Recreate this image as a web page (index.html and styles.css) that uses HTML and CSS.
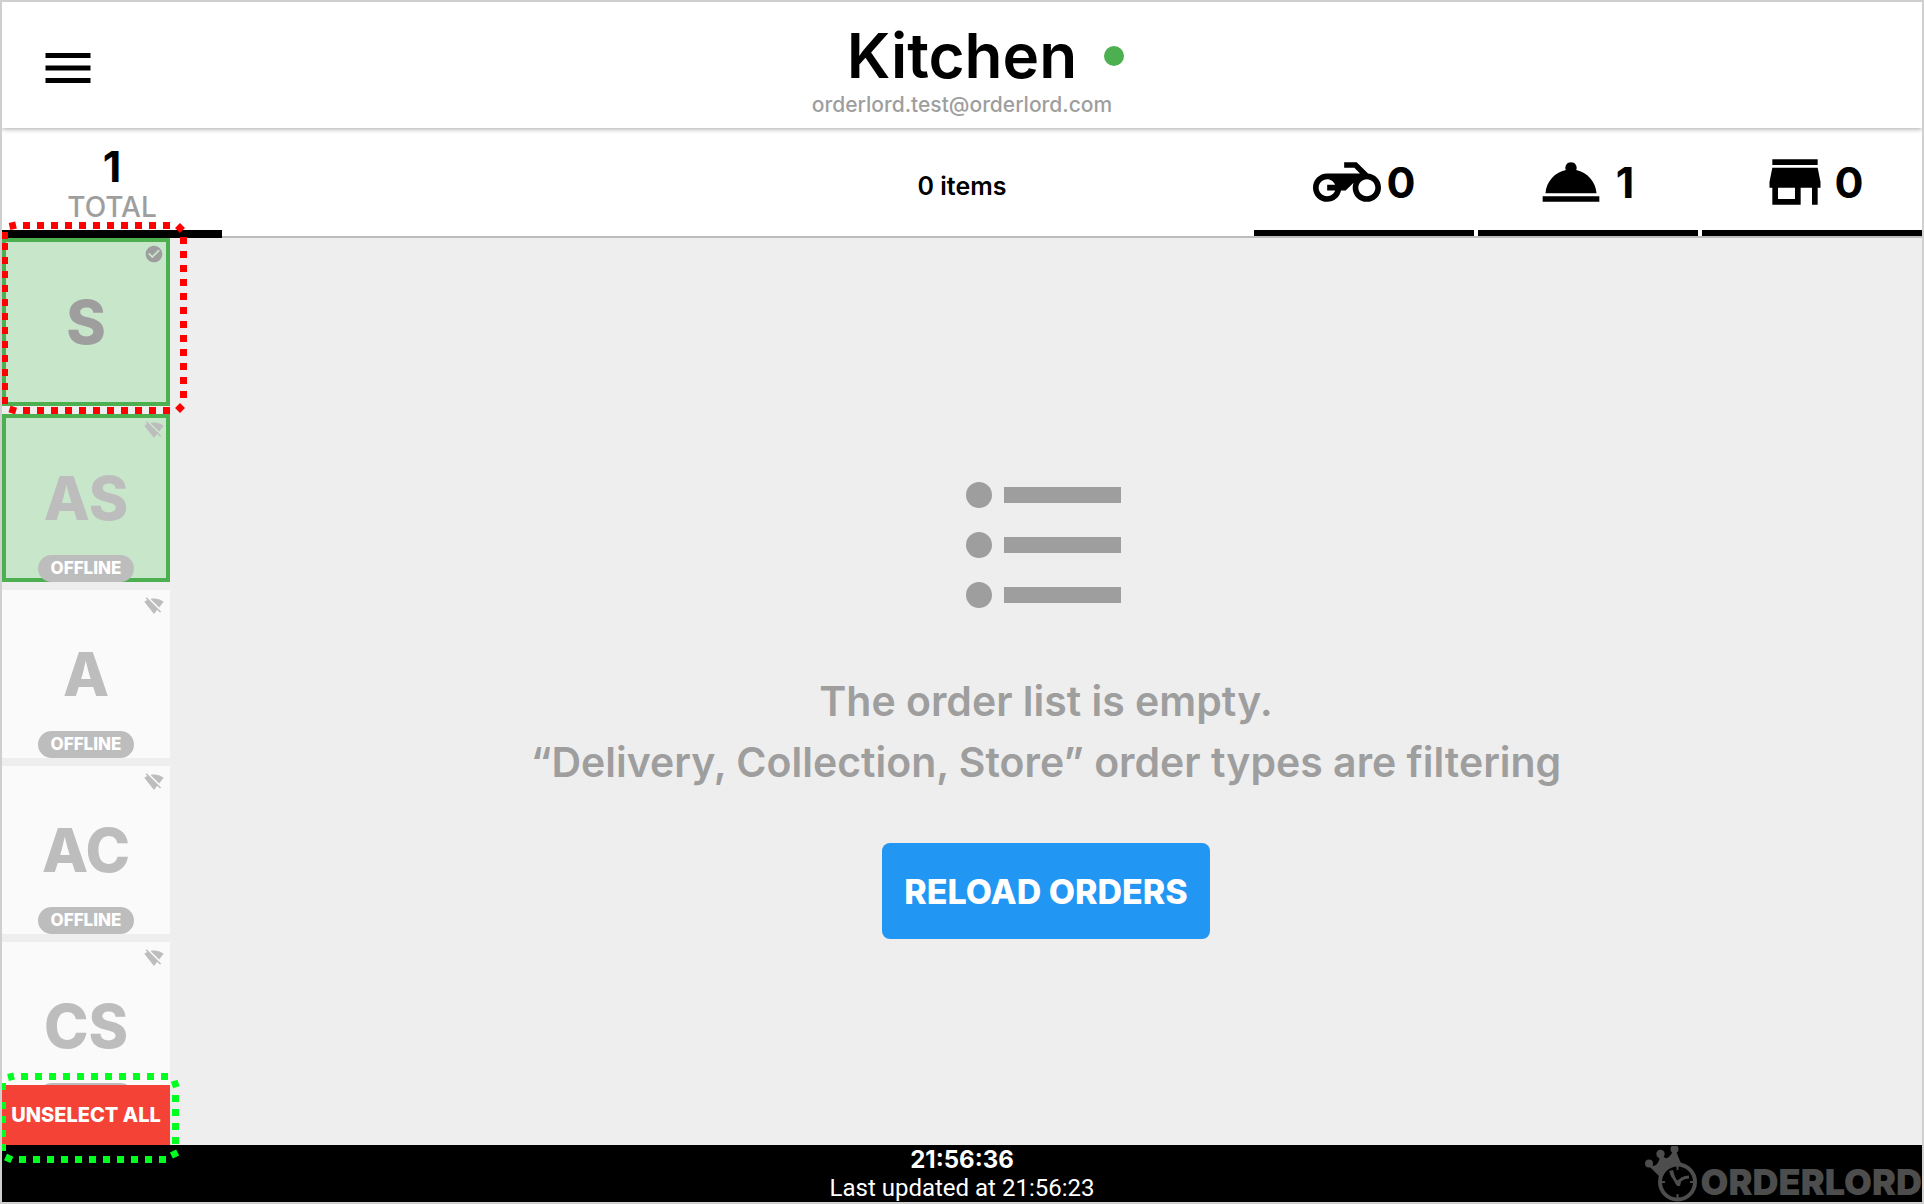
FILE: index.html
```html
<!DOCTYPE html>
<html lang="en">
<head>
<meta charset="utf-8">
<title>Kitchen</title>
<link rel="stylesheet" href="styles.css">
</head>
<body>
<svg class="defs" aria-hidden="true">
  <symbol id="wifi-off" viewBox="0 0 24 24"><path d="M23.640 7c-.45-.34-4.930-4-11.640-4-1.500 0-2.890.19-4.150.48L18.180 13.800 23.640 7zm-6.600 8.220L3.270 1.440 2 2.720l2.050 2.060C1.910 5.760.59 6.820.36 7l11.630 14.490.01.01.01-.01 3.900-4.860 3.320 3.320 1.270-1.270-3.460-3.460z"/></symbol>
</svg>
<header class="header">
  <button class="menu" type="button" aria-label="Menu">
    <svg viewBox="0 0 24 24"><path d="M3 18h18v-2H3v2zm0-5h18v-2H3v2zm0-7v2h18V6H3z"/></svg>
  </button>
  <div class="heading">
    <h1 class="title">Kitchen<span class="status"></span></h1>
    <p class="account">orderlord.test@orderlord.com</p>
  </div>
</header>
<nav class="stats">
  <button class="total" type="button"><span class="count">1</span><span class="total-label">TOTAL</span></button>
  <p class="items">0 items</p>
  <div class="types">
    <button class="type" type="button" aria-label="Delivery">
      <svg class="type-icon" viewBox="0 0 24 24"><path d="M19.440 9.030L15.410 5H11v2h3.590l2 2H5c-2.800 0-5 2.200-5 5s2.200 5 5 5c2.460 0 4.450-1.690 4.900-4h1.650l2.770-2.770c-.21.54-.32 1.140-.32 1.770 0 2.800 2.200 5 5 5s5-2.200 5-5c0-2.650-1.970-4.770-4.560-4.970zM7.820 15C7.400 16.150 6.280 17 5 17c-1.630 0-3-1.370-3-3s1.370-3 3-3c1.280 0 2.400.85 2.820 2H5v2h2.820zM19 17c-1.660 0-3-1.340-3-3s1.340-3 3-3 3 1.340 3 3-1.340 3-3 3z"/></svg>
      <span class="count">0</span>
    </button>
    <button class="type" type="button" aria-label="Collection">
      <svg class="type-icon" viewBox="0 0 24 24"><path d="M2 17h20v2H2zM13.840 7.790A2.006 2.006 0 0 0 12 5a2.006 2.006 0 0 0-1.840 2.790C6.250 8.600 3.270 11.930 3 16h18c-.27-4.070-3.250-7.400-7.160-8.210z"/></svg>
      <span class="count">1</span>
    </button>
    <button class="type" type="button" aria-label="Store">
      <svg class="type-icon" viewBox="0 0 24 24"><path d="M20 4H4v2h16V4zm1 10v-2l-1-5H4l-1 5v2h1v6h10v-6h4v6h2v-6h1zm-9 4H6v-4h6v4z"/></svg>
      <span class="count">0</span>
    </button>
  </div>
</nav>
<div class="content">
  <aside class="sidebar">
    <div class="tiles">
      <button class="tile tile-selected tile-online" type="button">S
        <svg class="tile-icon" viewBox="0 0 24 24"><path d="M12 2C6.480 2 2 6.480 2 12s4.480 10 10 10 10-4.480 10-10S17.520 2 12 2zm-2 15l-5-5 1.410-1.410L10 14.170l7.590-7.590L19 8l-9 9z"/></svg>
      </button>
      <button class="tile tile-selected" type="button">AS<svg class="tile-icon"><use href="#wifi-off"/></svg><span class="badge">OFFLINE</span></button>
      <button class="tile" type="button">A<svg class="tile-icon"><use href="#wifi-off"/></svg><span class="badge">OFFLINE</span></button>
      <button class="tile" type="button">AC<svg class="tile-icon"><use href="#wifi-off"/></svg><span class="badge">OFFLINE</span></button>
      <button class="tile" type="button">CS<svg class="tile-icon"><use href="#wifi-off"/></svg><span class="badge">OFFLINE</span></button>
    </div>
    <button class="unselect" type="button">UNSELECT ALL</button>
    <svg class="outline outline-tile" viewBox="0 0 190 196" aria-hidden="true">
      <path d="M23 7.500H171M23 192.500H171M183.500 19V181M4.500 39V190"/>
      <path d="M4.500 14V21M4.500 25V32"/>
      <path d="M9.500 8.500L16 7M177.500 7.500L182.500 12.500M182.500 187.500L177.500 192.500M9.500 191L16 193"/>
    </svg>
    <svg class="outline outline-unselect" viewBox="0 0 184 94" aria-hidden="true">
      <path d="M21 5.500H169M19 88.500H167M175.500 24V74M2.500 31V81M2.500 12V24"/>
      <path d="M8 6.500L14 5M172 14L178.500 12M173 80L176 86M5.500 86L12 89"/>
    </svg>
  </aside>
  <main class="empty">
    <svg class="list-icon" viewBox="0 0 160 128" aria-hidden="true">
      <circle cx="13" cy="14" r="13"/><circle cx="13" cy="64" r="13"/><circle cx="13" cy="114" r="13"/>
      <path d="M38 6h117v16H38zM38 56h117v16H38zM38 106h117v16H38z"/>
    </svg>
    <p class="message">The order list is empty.<br>“Delivery, Collection, Store” order types are filtering</p>
    <button class="reload" type="button">RELOAD ORDERS</button>
  </main>
</div>
<footer class="footer">
  <div class="times">
    <time class="clock">21:56:36</time>
    <span class="updated">Last updated at 21:56:23</span>
  </div>
  <div class="brand">
    <svg class="brand-icon" viewBox="0 0 54 56" aria-hidden="true">
      <circle cx="4" cy="17.500" r="4"/><circle cx="15.500" cy="8" r="4.200"/><circle cx="29.500" cy="3" r="4"/>
      <path d="M3 19L8 20Q14 20 15 9H17Q22 17 28 5H31L37 20Q24 18 15 31z"/>
      <circle class="face" cx="32.500" cy="36" r="17.500"/>
      <path class="ticks" d="M32.500 19v5M32.500 48v5M15 36h5M45 36h5"/>
      <path class="hands" d="M32.500 38L26 27M32.500 38Q36 31 44 31"/>
      <path d="M24 25l4-1 2 7-3 1zM30 36l3-2 3 2-1 4-3 0z"/>
    </svg>
    <span>ORDERLORD</span>
  </div>
</footer>
</body>
</html>
```
FILE: styles.css
```css
* { box-sizing: border-box; }

body {
  margin: 0;
  height: 100vh;
  display: flex;
  flex-direction: column;
  overflow: hidden;
  border: 2px solid #cfcfcf;
  background: #fff;
  color: #000;
  font-family: Inter, "Open Sans", sans-serif;
}

h1, p { margin: 0; }

button {
  margin: 0;
  padding: 0;
  border: 0;
  background: none;
  color: inherit;
  font: inherit;
  cursor: pointer;
}

svg { display: block; flex: none; }

.defs { position: absolute; width: 0; height: 0; }

.header {
  position: relative;
  z-index: 1;
  flex: none;
  display: grid;
  grid-template-columns: 1fr auto 1fr;
  height: 126px;
  padding: 0 36px;
  background: #fff;
  box-shadow: 0 1px 5px rgba(0, 0, 0, 0.35);
}

.menu { justify-self: start; align-self: center; padding-top: 6px; }
.menu svg { width: 60px; height: 60px; }

.heading {
  min-width: 324px;
  margin: 0 -12px;
  padding-top: 19px;
  text-align: center;
}

.title {
  position: relative;
  font-size: 62px;
  font-weight: 600;
  line-height: 70px;
}

.status {
  position: absolute;
  top: 25px;
  right: 0;
  width: 20px;
  height: 20px;
  border-radius: 50%;
  background: #4caf50;
}

.account { font-size: 21px; font-weight: 500; line-height: 28px; color: #9e9e9e; }

.stats {
  flex: none;
  display: grid;
  grid-template-columns: 1fr auto 1fr;
  grid-template-rows: 108px;
  height: 110px;
  border-bottom: 2px solid #bdbdbd;
}

.count {
  min-width: 28px;
  font-size: 43px;
  font-weight: 700;
  line-height: 44px;
}

.total {
  z-index: 1;
  width: 220px;
  height: 110px;
  padding-top: 16px;
  display: flex;
  flex-direction: column;
  align-items: center;
  border-bottom: 8px solid #000;
}

.total-label { font-size: 28px; font-weight: 500; line-height: 38px; color: #9e9e9e; }

.items { align-self: center; padding-top: 8px; font-size: 25px; font-weight: 600; line-height: 30px; }

.types { display: flex; justify-content: flex-end; gap: 4px; }

.type {
  width: 220px;
  padding-top: 6px;
  display: flex;
  align-items: center;
  justify-content: center;
  gap: 6px;
  border-bottom: 6px solid #000;
}

.type-icon { width: 68px; height: 68px; }

.content { flex: 1; min-height: 0; display: flex; background: #eee; }

.sidebar {
  position: relative;
  flex: none;
  width: 168px;
  display: flex;
  flex-direction: column;
}

.tiles {
  flex: 1;
  min-height: 0;
  overflow: hidden;
  display: flex;
  flex-direction: column;
  gap: 8px;
}

.tile {
  position: relative;
  flex: none;
  height: 168px;
  background: #fafafa;
  color: #bdbdbd;
  font-size: 60px;
  font-weight: 800;
  line-height: 166px;
  text-align: center;
}

.tile-selected {
  background: #c8e6c9;
  box-shadow: inset 0 0 0 4px #4caf50;
}

.tile-online { color: #9e9e9e; }

.tile-icon {
  position: absolute;
  top: 6px;
  right: 6px;
  width: 20px;
  height: 20px;
  fill: currentColor;
}

.badge {
  position: absolute;
  bottom: 0;
  left: 50%;
  width: 96px;
  margin-left: -48px;
  border-radius: 14px;
  background: #bdbdbd;
  color: #fff;
  font-size: 17px;
  line-height: 27px;
}

.unselect {
  flex: none;
  height: 60px;
  background: #f44336;
  color: #fff;
  font-size: 20px;
  font-weight: 800;
  white-space: nowrap;
}

.outline {
  position: absolute;
  z-index: 2;
  left: -2px;
  fill: none;
  stroke-width: 7;
  stroke-dasharray: 7 7;
  pointer-events: none;
}

.outline-tile { top: -20px; width: 190px; height: 196px; stroke: #f00; }
.outline-unselect { bottom: -20px; width: 184px; height: 94px; stroke: #00ff20; }

.empty {
  flex: 1;
  display: flex;
  flex-direction: column;
  align-items: center;
  padding-top: 243px;
  color: #9e9e9e;
}

.list-icon { width: 160px; height: 128px; fill: #9e9e9e; }

.message {
  margin-top: 62px;
  font-size: 41px;
  font-weight: 600;
  line-height: 61px;
  text-align: center;
}

.reload {
  margin-top: 50px;
  width: 328px;
  height: 96px;
  border-radius: 8px;
  background: #2196f3;
  color: #fff;
  font-size: 34px;
  font-weight: 800;
  white-space: nowrap;
}

.footer {
  flex: none;
  display: grid;
  grid-template-columns: 1fr auto 1fr;
  height: 57px;
  background: #000;
  color: #fff;
}

.times {
  grid-column: 2;
  display: flex;
  flex-direction: column;
  align-items: center;
}

.clock { font-size: 24px; font-weight: 700; line-height: 30px; }
.updated { font-family: Roboto, sans-serif; font-size: 24px; line-height: 27px; }

.brand {
  justify-self: end;
  display: flex;
  align-items: center;
  gap: 2px;
  color: #4d4d4d;
  font-size: 36px;
  font-weight: 900;
  line-height: 40px;
}

.brand span { padding-top: 16px; }
.brand-icon { width: 54px; height: 56px; fill: #4d4d4d; }
.face { fill: #000; stroke: #4d4d4d; stroke-width: 4; }
.ticks { stroke: #4d4d4d; stroke-width: 2; }
.hands { fill: none; stroke: #4d4d4d; stroke-width: 3; }
```
